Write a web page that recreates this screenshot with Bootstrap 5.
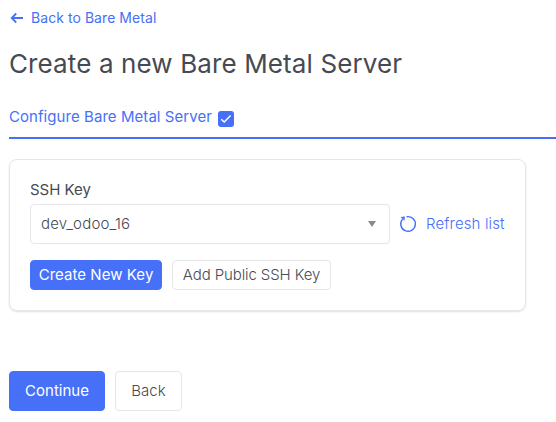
<!DOCTYPE html>
<html lang="en">
<head>
<meta charset="utf-8">
<meta name="viewport" content="width=device-width, initial-scale=1">
<title>Create a new Bare Metal Server</title>
<link href="https://cdn.jsdelivr.net/npm/bootstrap@5.3.0/dist/css/bootstrap.min.css" rel="stylesheet">
<style>
:root { --brand: #4670f8; --line: #e6e6e8; --ink: #474a52; }
body { font-family: Inter, "Liberation Sans", sans-serif; font-size: 15px; line-height: 20px; color: var(--ink); background: #fff; overflow: hidden; }
.page { padding: 8px 0 0 9px; }
.brand-link { color: var(--brand); }
.back-link { font-size: 14px; height: 20px; gap: 7px; padding-left: 1px; letter-spacing: .06px; }
.page-title { font-size: 26px; line-height: 32px; font-weight: 400; margin: 20px 0 0; white-space: nowrap; letter-spacing: .12px; }
.step-tab { height: 39px; margin-top: 20px; border-bottom: 2px solid var(--brand); padding-top: 7px; gap: 6px; letter-spacing: .06px; }
.check-box { width: 16px; height: 16px; margin-top: 4px; background: var(--brand); border-radius: 3px; }
.panel { width: 517px; height: 152px; margin-top: 20px; padding: 20px; border: 1px solid var(--line); border-radius: 8px; box-shadow: 0 1px 2px rgba(0,0,0,.12); }
.key-select { width: 360px; height: 40px; margin-top: 4px; padding: 0 13px 0 10px; border: 1px solid var(--line); border-radius: 4px; letter-spacing: .2px; }
.refresh-link { letter-spacing: .14px; }
.caret { width: 0; height: 0; border: 4.5px solid transparent; border-top: 6px solid #858994; border-bottom: 0; }
.btn { --bs-btn-border-radius: 4px; --bs-btn-line-height: 20px; --bs-btn-font-size: 15px; white-space: nowrap; padding: 0; }
.btn-brand { --bs-btn-bg: #4670f8; --bs-btn-color: #fff; --bs-btn-border-color: #4670f8; }
.btn-plain { --bs-btn-bg: #fff; --bs-btn-color: #474a52; --bs-btn-border-color: #e6e6e8; font-weight: 300; }
.light { font-weight: 300; }
.btn-create { width: 132px; height: 30px; letter-spacing: .05px; }
.btn-add { width: 159px; height: 30px; letter-spacing: -.11px; }
.btn-next { width: 96px; height: 40px; }
.btn-prev { width: 67px; height: 40px; }
.button-row { gap: 10px; }
.actions { margin-top: 60px; }
</style>
</head>
<body>
<main class="page">
  <a href="#" class="back-link brand-link d-flex align-items-center text-decoration-none">
    <svg width="14" height="12" viewBox="0 0 14 12" fill="none" stroke="currentColor" stroke-width="1.8"><path d="M13 6H2M6.2 1.5 1.7 6l4.5 4.5"/></svg>
    <span>Back to Bare Metal</span>
  </a>
  <h1 class="page-title">Create a new Bare Metal Server</h1>
  <div class="step-tab brand-link d-flex align-items-start">
    <span>Configure Bare Metal Server</span>
    <span class="check-box d-flex align-items-center justify-content-center">
      <svg width="12" height="10" viewBox="0 0 12 10" fill="none" stroke="#fff" stroke-width="1.4"><path d="M1.3 5.2 4.2 8 10.6 1.6"/></svg>
    </span>
  </div>
  <section class="panel">
    <div>SSH Key</div>
    <div class="d-flex align-items-center">
      <div class="key-select d-flex align-items-center justify-content-between"><span class="light">dev_odoo_16</span><span class="caret"></span></div>
      <a href="#" class="refresh-link brand-link light d-flex align-items-center text-decoration-none text-nowrap ms-2 mt-1">
        <svg class="me-2" width="20" height="20" viewBox="0 0 20 20" fill="none" stroke="currentColor" stroke-width="1.4"><path d="M8.6 2.8A7.3 7.3 0 1 1 4.6 5.1"/><path d="M2.6 2.9 6.9 2.6 6.5 6.8Z" fill="currentColor" stroke="none"/></svg>
        <span>Refresh list</span>
      </a>
    </div>
    <div class="button-row d-flex mt-3">
      <button class="btn btn-brand btn-create">Create New Key</button>
      <button class="btn btn-plain btn-add">Add Public SSH Key</button>
    </div>
  </section>
  <div class="actions button-row d-flex">
    <button class="btn btn-brand btn-next">Continue</button>
    <button class="btn btn-plain btn-prev">Back</button>
  </div>
</main>
<script src="https://cdn.jsdelivr.net/npm/bootstrap@5.3.0/dist/js/bootstrap.bundle.min.js"></script>
</body>
</html>
